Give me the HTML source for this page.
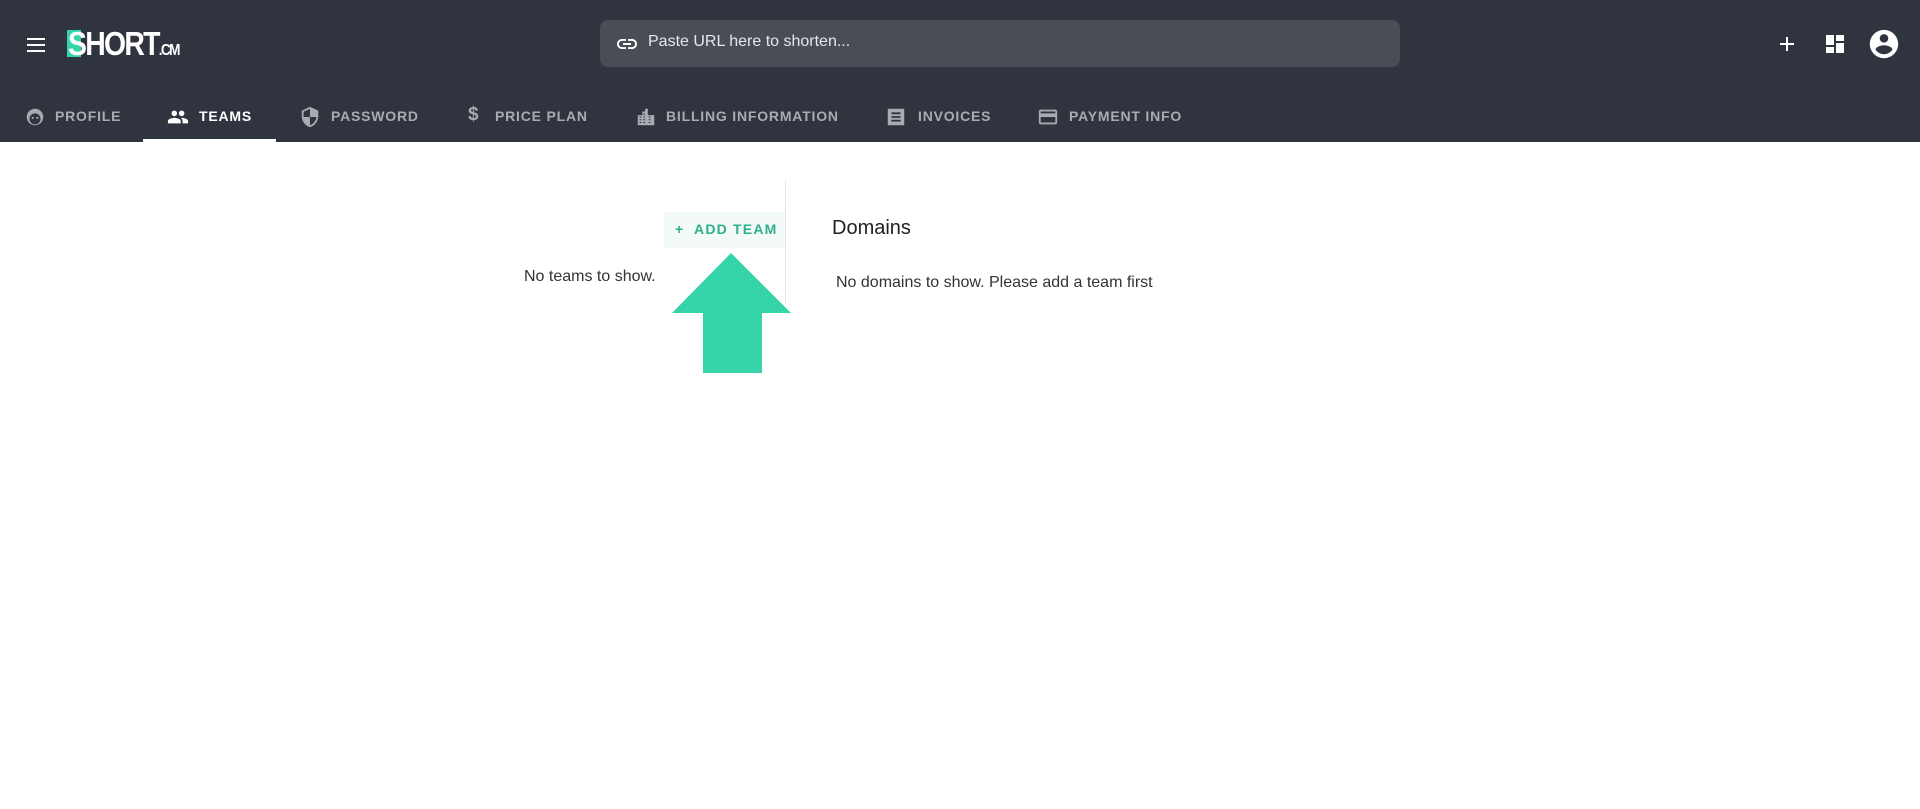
<!DOCTYPE html>
<html><head><meta charset="utf-8"><style>
*{margin:0;padding:0;box-sizing:border-box}
body{width:1920px;height:809px;background:#fff;font-family:"Liberation Sans",sans-serif;position:relative;overflow:hidden}
.hdr{position:absolute;left:0;top:0;width:1920px;height:142px;background:#30343f}
.abs{position:absolute}
.tab{position:absolute;top:108px;font-size:14px;font-weight:bold;letter-spacing:0.8px;color:#a9abb0;white-space:nowrap}
.tab.act{color:#fff}
.ic{position:absolute;top:106px}
</style></head><body>
<div class="hdr"></div>
<svg class="abs" style="left:24px;top:33px" width="24" height="24" viewBox="0 0 24 24"><path d="M3 6h18M3 12h18M3 18h18" stroke="#fff" stroke-width="2"/></svg>
<div class="abs" style="left:67px;top:30px;width:14px;height:27px;background:#35d4a9"></div>
<div class="abs" style="left:68px;top:25px;font-size:33px;font-weight:bold;color:#fff;letter-spacing:-2px;transform:scaleX(0.86);transform-origin:left">SHORT<span style="font-size:16px">.CM</span></div>
<div class="abs" style="left:600px;top:20px;width:800px;height:47px;background:#4a4d55;border-radius:8px"></div>
<svg class="abs" style="left:615px;top:32px" width="24" height="24" viewBox="0 0 24 24"><path d="M3.9 12c0-1.71 1.39-3.1 3.1-3.1h4V7H7c-2.760 0-5 2.24-5 5s2.24 5 5 5h4v-1.9H7c-1.71 0-3.1-1.39-3.1-3.1zM8 13h8v-2H8v2zm9-6h-4v1.9h4c1.71 0 3.1 1.39 3.1 3.1s-1.39 3.1-3.1 3.1h-4V17h4c2.76 0 5-2.24 5-5s-2.24-5-5-5z" fill="#fff"/></svg>
<div class="abs" style="left:648px;top:33px;font-size:16px;color:#e6e7e9">Paste URL here to shorten...</div>
<svg class="abs" style="left:1775px;top:32px" width="24" height="24" viewBox="0 0 24 24"><path d="M12 5v14M5 12h14" stroke="#fff" stroke-width="2"/></svg>
<svg class="abs" style="left:1823px;top:32px" width="24" height="24" viewBox="0 0 24 24"><path d="M3 13h8V3H3v10zm0 8h8v-6H3v6zm10 0h8V11h-8v10zm0-18v6h8V3h-8z" fill="#fff"/></svg>
<svg class="abs" style="left:1867px;top:27px" width="34" height="34" viewBox="0 0 24 24"><path d="M12 2C6.48 2 2 6.48 2 12s4.480 10 10 10 10-4.48 10-10S17.52 2 12 2zm0 3c1.66 0 3 1.34 3 3s-1.34 3-3 3-3-1.34-3-3 1.34-3 3-3zm0 14.2c-2.5 0-4.71-1.28-6-3.22.03-1.99 4-3.08 6-3.08 1.99 0 5.97 1.09 6 3.08-1.29 1.94-3.5 3.22-6 3.22z" fill="#fff"/></svg>
<svg class="ic" style="left:24px" width="22" height="22" viewBox="0 0 24 24"><circle cx="12" cy="12" r="9" fill="#a9abb0"/><circle cx="12" cy="14" r="6" fill="#30343f"/><circle cx="9.5" cy="13" r="1.2" fill="#a9abb0"/><circle cx="14.5" cy="13" r="1.2" fill="#a9abb0"/></svg>
<div class="tab" style="left:55px">PROFILE</div>
<svg class="ic" style="left:167px" width="22" height="22" viewBox="0 0 24 24"><path d="M16 11c1.66 0 2.99-1.34 2.99-3S17.66 5 16 5c-1.66 0-3 1.34-3 3s1.34 3 3 3zm-8 0c1.66 0 2.99-1.34 2.99-3S9.66 5 8 5C6.34 5 5 6.34 5 8s1.34 3 3 3zm0 2c-2.33 0-7 1.17-7 3.5V19h14v-2.5c0-2.33-4.67-3.5-7-3.5zm8 0c-.29 0-.62.02-.97.05 1.16.84 1.97 1.970 1.97 3.45V19h6v-2.5c0-2.33-4.67-3.5-7-3.5z" fill="#fff"/></svg>
<div class="tab act" style="left:199px">TEAMS</div>
<div class="abs" style="left:143px;top:139px;width:133px;height:3px;background:#fff"></div>
<svg class="ic" style="left:299px" width="22" height="22" viewBox="0 0 24 24"><path d="M12 1L3 5v6c0 5.55 3.84 10.74 9 12 5.16-1.26 9-6.45 9-12V5l-9-4zm0 10.99h7c-.53 4.12-3.28 7.79-7 8.94V12H5V6.3l7-3.11v8.8z" fill="#a9abb0"/></svg>
<div class="tab" style="left:331px">PASSWORD</div>
<div class="tab" style="left:468px;font-size:19px;top:104px">$</div>
<div class="tab" style="left:495px">PRICE PLAN</div>
<svg class="ic" style="left:635px" width="22" height="22" viewBox="0 0 24 24"><path d="M3 21V10h5V6h3V3h3v7h7v11z" fill="#a9abb0"/><path d="M5 12h2M5 15h2M5 18h2M9 9h2M9 12h2M9 15h2M9 18h2M15 12h2M15 15h2M15 18h2" stroke="#30343f" stroke-width="1"/></svg>
<div class="tab" style="left:666px">BILLING INFORMATION</div>
<svg class="ic" style="left:885px" width="22" height="22" viewBox="0 0 24 24"><path d="M3 3h18v18H3z" fill="#a9abb0"/><path d="M7 8h10M7 12h10M7 16h10" stroke="#30343f" stroke-width="2"/></svg>
<div class="tab" style="left:918px">INVOICES</div>
<svg class="ic" style="left:1037px" width="22" height="22" viewBox="0 0 24 24"><path d="M20 4H4c-1.11 0-2 .89-2 2v12c0 1.11.89 2 2 2h16c1.11 0 2-.89 2-2V6c0-1.11-.89-2-2-2zm0 14H4v-6h16v6zm0-10H4V6h16v2z" fill="#a9abb0"/></svg>
<div class="tab" style="left:1069px">PAYMENT INFO</div>
<div class="abs" style="left:785px;top:180px;width:1px;height:124px;background:#e6e6e6"></div>
<div class="abs" style="left:664px;top:212px;width:121px;height:36px;background:#f3faf8"></div>
<div class="abs" style="left:675px;top:221px;font-size:14px;font-weight:bold;letter-spacing:1.2px;color:#2fae8c">+&nbsp; ADD TEAM</div>
<div class="abs" style="left:524px;top:268px;font-size:16px;color:#333">No teams to show.</div>
<svg class="abs" style="left:672px;top:253px" width="120" height="121" viewBox="0 0 120 121"><path d="M59 0L119 60H90V120H31V60H0Z" fill="#35d4a9"/></svg>
<div class="abs" style="left:832px;top:217px;font-size:20px;color:#222">Domains</div>
<div class="abs" style="left:836px;top:274px;font-size:16px;color:#333">No domains to show. Please add a team first</div>
</body></html>
